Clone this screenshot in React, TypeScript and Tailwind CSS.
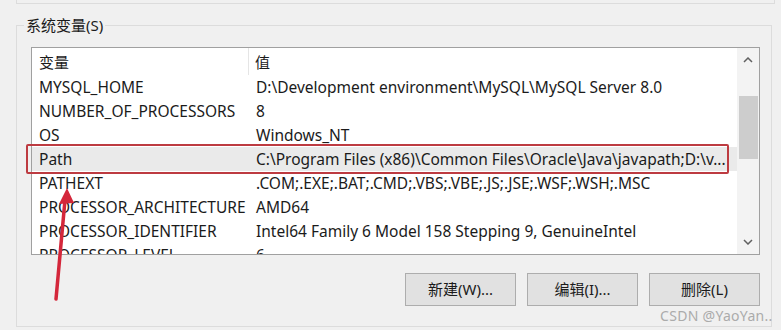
import React from "react";

const rows: [string, string][] = [
  ["MYSQL_HOME", "D:\\Development environment\\MySQL\\MySQL Server 8.0"],
  ["NUMBER_OF_PROCESSORS", "8"],
  ["OS", "Windows_NT"],
  ["Path", "C:\\Program Files (x86)\\Common Files\\Oracle\\Java\\javapath;D:\\v..."],
  ["PATHEXT", ".COM;.EXE;.BAT;.CMD;.VBS;.VBE;.JS;.JSE;.WSF;.WSH;.MSC"],
  ["PROCESSOR_ARCHITECTURE", "AMD64"],
  ["PROCESSOR_IDENTIFIER", "Intel64 Family 6 Model 158 Stepping 9, GenuineIntel"],
  ["PROCESSOR_LEVEL", "6"],
];

function Chevron({ down }: { down?: boolean }) {
  return (
    <svg width="10" height="6" viewBox="0 0 10 6" className="block">
      <path
        d={down ? "M1 1 L5 5 L9 1" : "M1 5 L5 1 L9 5"}
        fill="none"
        stroke="#606060"
        strokeWidth="1.5"
      />
    </svg>
  );
}

function Button({ label }: { label: string }) {
  return (
    <div className="w-[111px] h-[33px] flex items-center justify-center bg-[#e1e1e1] border border-[#adadad] text-[15px] text-[#1b1b1b]">
      {label}
    </div>
  );
}

export default function App() {
  return (
    <div className="relative w-[781px] h-[330px] overflow-hidden bg-[#f0f0f0] text-[#1b1b1b] font-['Noto_Sans','Noto_Sans_CJK_SC',sans-serif]">
      {/* bottom edge of the group above */}
      <div className="ml-[16px] w-[759px] h-[4px] border-x border-b border-[#dcdcdc]" />

      {/* 系统变量 group */}
      <div className="relative mt-[21px] ml-[16px] w-[756px] h-[302px] border border-[#dcdcdc]">
        <span className="absolute -top-[11px] left-[7px] px-[2px] bg-[#f0f0f0] text-[15px] leading-[20px]">
          系统变量(S)
        </span>

        <div className="ml-[14px] mt-[21px] w-[729px] h-[208px] border border-[#a0a0a0] bg-white flex overflow-hidden">
          <div className="flex-1 min-w-0 overflow-hidden text-[15.5px]">
            <div className="flex h-[27px] items-center">
              <div className="w-[217px] h-full flex items-center pl-[7px] pt-[2px] border-r border-[#e5e5e5] text-[15px]">
                变量
              </div>
              <div className="pl-[6px] pt-[2px] text-[15px]">值</div>
            </div>
            {rows.map(([name, value]) => (
              <div
                key={name}
                className={`flex h-[24px] pt-[2px] items-center whitespace-nowrap ${name === "Path" ? "bg-[#eaeaea]" : ""}`}
              >
                <div className="w-[217px] shrink-0 pl-[7px]">{name}</div>
                <div className="pl-[7px]">{value}</div>
              </div>
            ))}
          </div>

          {/* scrollbar */}
          <div className="w-[22px] shrink-0 bg-[#f3f3f3] flex flex-col items-center">
            <div className="h-[24px] flex items-center justify-center">
              <Chevron />
            </div>
            <div className="mt-[24px] w-[19px] h-[63px] bg-[#cdcdcd]" />
            <div className="flex-1" />
            <div className="h-[24px] flex items-center justify-center">
              <Chevron down />
            </div>
          </div>
        </div>

        <div className="flex justify-end gap-[11px] mt-[18px] mr-[11px]">
          <Button label="新建(W)..." />
          <Button label="编辑(I)..." />
          <Button label="删除(L)" />
        </div>
      </div>

      {/* annotation: red box */}
      <div className="absolute left-[26px] top-[144px] w-[703px] h-[30px] border-2 border-[#bd3b41] rounded-[2px]" />

      {/* annotation: red arrow */}
      <svg className="absolute left-0 top-0" width="781" height="330" viewBox="0 0 781 330">
        <path d="M56 299 L65 200" stroke="#d4273b" strokeWidth="3.5" strokeLinecap="round" fill="none" />
        <path d="M67 188 L59 204 L74 203 Z" fill="#d4273b" />
      </svg>

      {/* watermark */}
      <div className="absolute left-[660px] top-[306px] text-[14px] leading-[20px] text-[#ababab] tracking-[0.3px]">
        CSDN @YaoYan..
      </div>
    </div>
  );
}
